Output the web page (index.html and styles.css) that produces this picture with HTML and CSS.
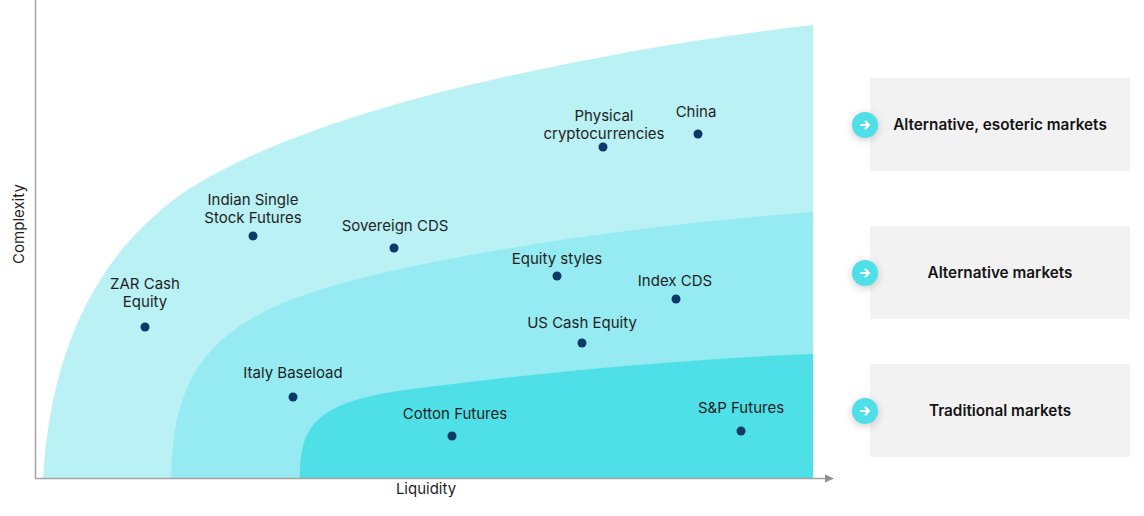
FILE: index.html
```html
<!DOCTYPE html>
<html lang="en">
<head>
<meta charset="utf-8">
<title>Market complexity vs liquidity</title>
<link rel="stylesheet" href="styles.css">
</head>
<body>
<main class="page">
  <svg class="chart" width="840" height="516" viewBox="0 0 840 516" aria-label="Complexity vs liquidity chart">
    <path class="zone-outer" d="M43,478 C50,360 90,260 180,195 C260,140 400,100 500,78 C600,56 700,38 813,25 L813,478 Z"/>
    <path class="zone-mid" d="M171,478 C173,400 190,340 290,300 C380,265 600,228 813,212 L813,478 Z"/>
    <path class="zone-inner" d="M300,478 C300,425 315,400 420,388 C560,370 700,358 813,354 L813,478 Z"/>

    <line class="axis" x1="35.5" y1="0" x2="35.5" y2="478.5"/>
    <line class="axis" x1="35" y1="478.5" x2="828" y2="478.5"/>
    <polygon class="axis-head" points="825,474.5 834,478.5 825,482.5"/>

    <text class="axis-label" transform="translate(24,224) rotate(-90)">Complexity</text>
    <text class="axis-label" x="426" y="494">Liquidity</text>

    <g class="points">
      <text x="145" y="289">ZAR Cash</text>
      <text x="145" y="307">Equity</text>
      <circle cx="145" cy="327" r="4.5"/>

      <text x="253" y="205">Indian Single</text>
      <text x="253" y="223">Stock Futures</text>
      <circle cx="253" cy="236" r="4.5"/>

      <text x="395" y="231">Sovereign CDS</text>
      <circle cx="394" cy="248" r="4.5"/>

      <text x="604" y="121">Physical</text>
      <text x="604" y="139">cryptocurrencies</text>
      <circle cx="603" cy="147" r="4.5"/>

      <text x="696" y="117">China</text>
      <circle cx="698" cy="134" r="4.5"/>

      <text x="557" y="264">Equity styles</text>
      <circle cx="557" cy="276" r="4.5"/>

      <text x="675" y="286">Index CDS</text>
      <circle cx="676" cy="299" r="4.5"/>

      <text x="582" y="328">US Cash Equity</text>
      <circle cx="582" cy="343" r="4.5"/>

      <text x="293" y="378">Italy Baseload</text>
      <circle cx="293" cy="397" r="4.5"/>

      <text x="455" y="419">Cotton Futures</text>
      <circle cx="452" cy="436" r="4.5"/>

      <text x="741" y="413">S&amp;P Futures</text>
      <circle cx="741" cy="431" r="4.5"/>
    </g>
  </svg>

  <section class="legend">
    <div class="card card-esoteric">
      <span class="badge"><svg width="26" height="26" viewBox="0 0 26 26"><path d="M9,13 H17 M13.5,9.5 L17,13 L13.5,16.5"/></svg></span>
      <span class="card-text">Alternative, esoteric markets</span>
    </div>
    <div class="card card-alt">
      <span class="badge"><svg width="26" height="26" viewBox="0 0 26 26"><path d="M9,13 H17 M13.5,9.5 L17,13 L13.5,16.5"/></svg></span>
      <span class="card-text">Alternative markets</span>
    </div>
    <div class="card card-trad">
      <span class="badge"><svg width="26" height="26" viewBox="0 0 26 26"><path d="M9,13 H17 M13.5,9.5 L17,13 L13.5,16.5"/></svg></span>
      <span class="card-text">Traditional markets</span>
    </div>
  </section>
</main>
</body>
</html>
```

FILE: styles.css
```css
html, body {
  margin: 0;
  padding: 0;
  background: #ffffff;
}

body {
  font-family: Inter, "Noto Sans", "Liberation Sans", sans-serif;
  color: #1a1a1a;
}

.page {
  display: flex;
  width: 1144px;
  height: 516px;
  overflow: hidden;
}

.chart {
  flex: 0 0 840px;
  display: block;
}

.zone-outer { fill: #b9f1f4; }
.zone-mid { fill: #95ebf1; }
.zone-inner { fill: #4fdfe7; }

.axis {
  stroke: #a3a3a3;
  stroke-width: 1.5;
}

.axis-head { fill: #8f8f8f; }

.axis-label {
  font-family: Inter, "Noto Sans", "Liberation Sans", sans-serif;
  font-size: 15px;
  fill: #1f1f1f;
  text-anchor: middle;
}

.points text {
  font-family: Inter, "Noto Sans", "Liberation Sans", sans-serif;
  font-size: 15px;
  fill: #1f1f1f;
  text-anchor: middle;
}

.points circle { fill: #0b3a6a; }

.legend {
  display: flex;
  flex-direction: column;
  padding-top: 78px;
  margin-left: 30px;
}

.card {
  position: relative;
  width: 260px;
  height: 93px;
  background: #f2f2f2;
  display: flex;
  align-items: center;
  justify-content: center;
}

.card-alt { margin-top: 55px; }
.card-trad { margin-top: 45px; }

.card-text {
  font-size: 15.3px;
  font-weight: 600;
  color: #141414;
}

.badge {
  position: absolute;
  left: -18px;
  top: 50%;
  width: 26px;
  height: 26px;
  margin-top: -13px;
  border-radius: 50%;
  background: #4fdfe7;
  box-shadow: 0 2px 8px rgba(0, 0, 0, 0.2);
  display: flex;
}

.badge path {
  fill: none;
  stroke: #ffffff;
  stroke-width: 2.2;
  stroke-linecap: round;
  stroke-linejoin: round;
}
```
